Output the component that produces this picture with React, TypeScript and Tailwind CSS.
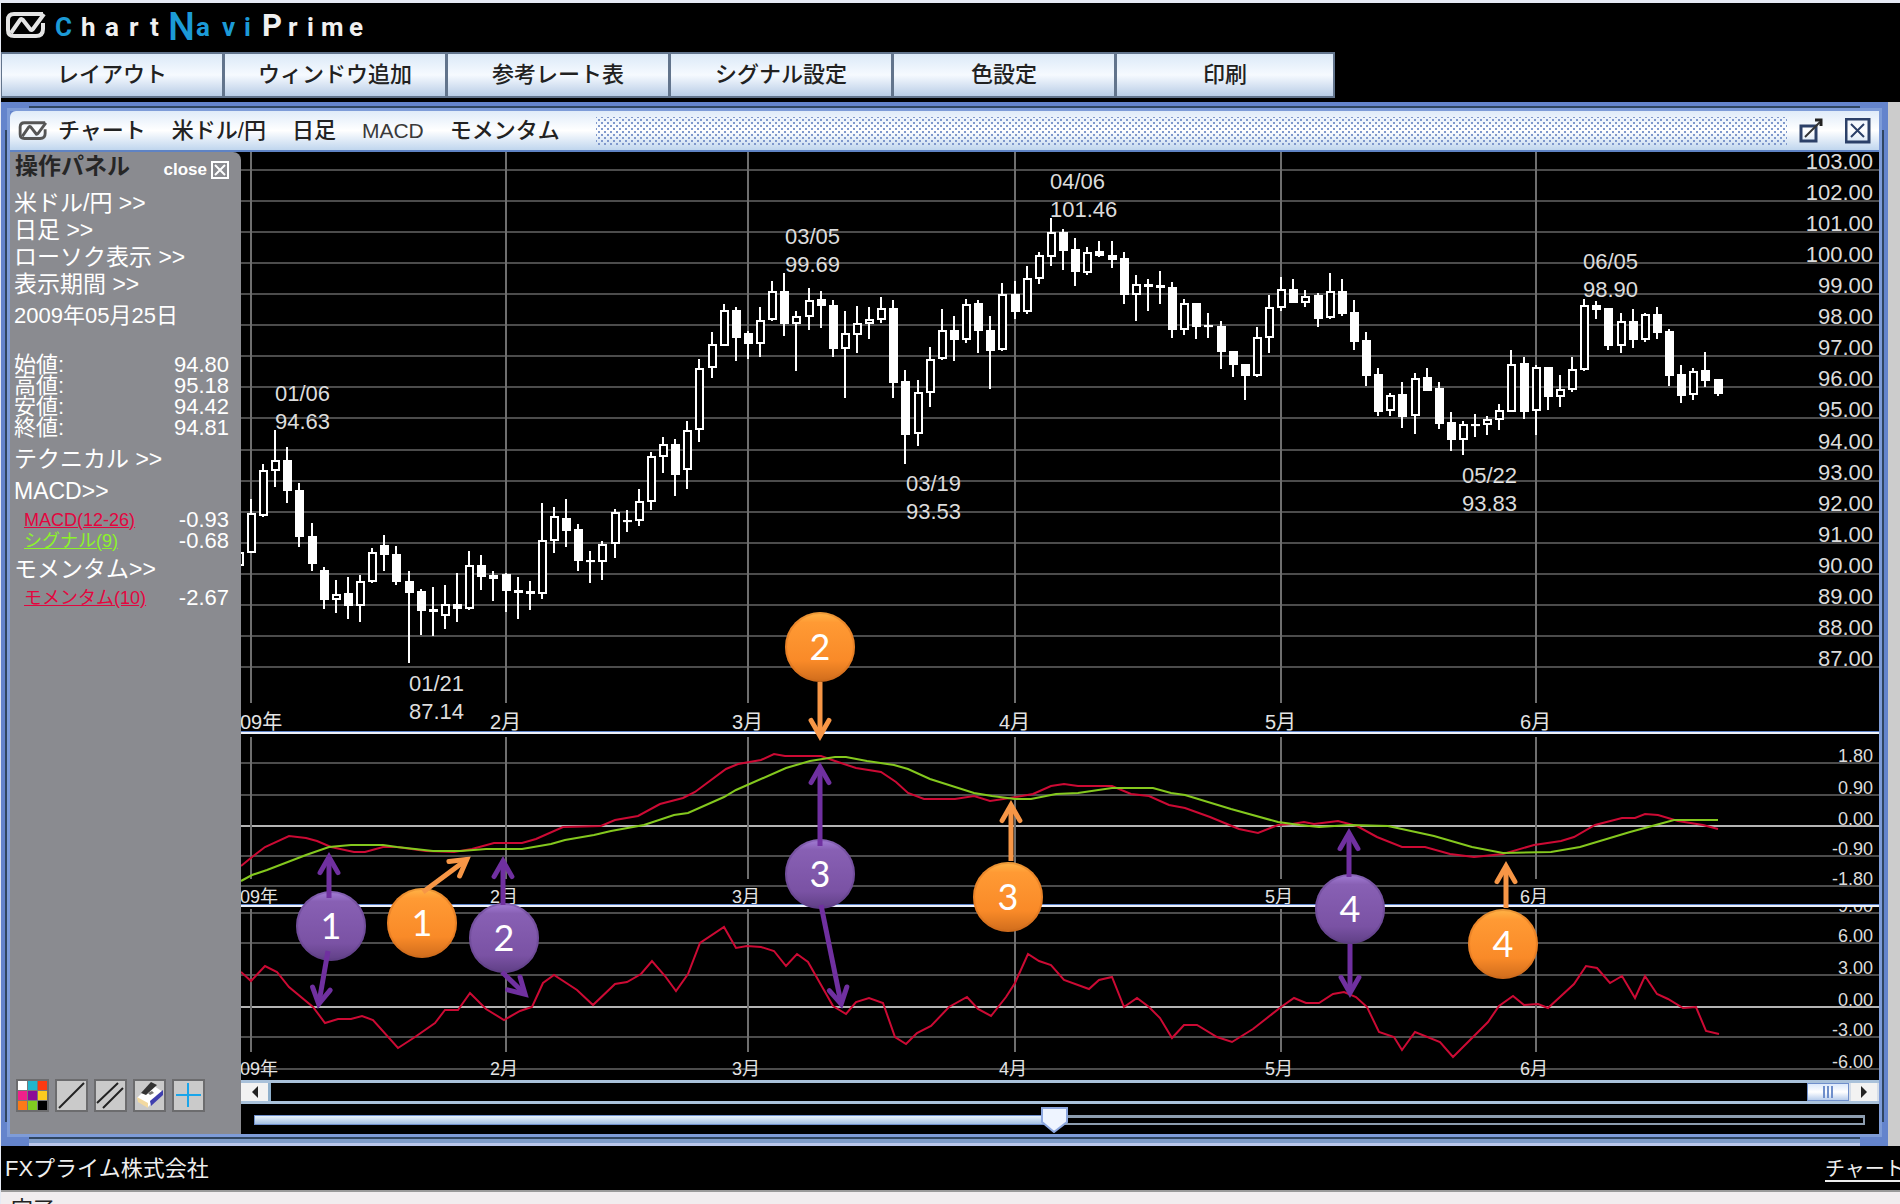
import { useState } from "react"
import type { ReactNode } from "react"

type Candle = [high: number, top: number, bottom: number, low: number, filled: 0 | 1]
type Point = [x: number, y: number]

const MENU = ["レイアウト", "ウィンドウ追加", "参考レート表", "シグナル設定", "色設定", "印刷"]
const PANEL_MENU = ["米ドル/円", "日足", "ローソク表示", "表示期間"]
const OHLC = [
  { label: "始値:", value: "94.80" },
  { label: "高値:", value: "95.18" },
  { label: "安値:", value: "94.42" },
  { label: "終値:", value: "94.81" },
]

const FIRST_X = 251
const STEP = 12.12
const MONTHS = [
  { x: 251, label: "09年" },
  { x: 506, label: "2月" },
  { x: 748, label: "3月" },
  { x: 1015, label: "4月" },
  { x: 1281, label: "5月" },
  { x: 1536, label: "6月" },
]

// One entry per trading day, starting on the last day of 2008
const CANDLES: Candle[] = [
  [552, 552, 566, 566, 0],
  [499, 513, 553, 553, 0], [464, 470, 516, 517, 0], [430, 460, 471, 487, 0], [447, 460, 491, 503, 1],
  [483, 490, 537, 547, 1], [523, 536, 564, 571, 1], [567, 570, 600, 609, 1], [580, 594, 600, 613, 0],
  [577, 593, 606, 619, 1], [575, 581, 606, 622, 0], [548, 552, 582, 583, 0], [535, 545, 555, 571, 1],
  [546, 554, 582, 585, 1], [571, 581, 593, 663, 1], [589, 591, 611, 635, 1], [587, 609, 612, 636, 1],
  [585, 604, 616, 629, 0], [573, 604, 609, 622, 1], [551, 565, 609, 610, 0], [555, 565, 577, 590, 1],
  [571, 575, 579, 601, 1], [573, 574, 591, 612, 1], [577, 590, 593, 619, 1], [581, 591, 594, 610, 1],
  [503, 540, 594, 599, 0], [507, 516, 541, 553, 0], [499, 518, 531, 547, 1], [524, 529, 561, 571, 1],
  [551, 560, 562, 583, 1], [541, 544, 562, 580, 0], [509, 512, 544, 558, 0], [510, 520, 522, 532, 1],
  [489, 501, 521, 526, 0], [452, 456, 502, 510, 0], [437, 444, 457, 473, 0], [439, 444, 475, 496, 1],
  [421, 430, 470, 489, 0], [359, 368, 430, 442, 0], [332, 344, 368, 378, 0], [304, 310, 346, 346, 0],
  [307, 310, 338, 361, 1], [331, 333, 344, 359, 1], [307, 320, 344, 357, 0], [281, 291, 320, 321, 0],
  [273, 291, 324, 336, 1], [311, 316, 324, 371, 0], [288, 300, 317, 330, 0], [291, 299, 306, 328, 1],
  [300, 305, 349, 357, 1], [311, 333, 349, 398, 0], [306, 323, 335, 353, 0], [307, 319, 324, 339, 0],
  [297, 308, 320, 323, 0], [300, 308, 383, 398, 1], [370, 381, 435, 464, 1], [380, 392, 434, 446, 0],
  [347, 359, 393, 407, 0], [309, 330, 359, 360, 0], [316, 330, 340, 361, 1], [299, 304, 340, 343, 0],
  [300, 303, 331, 353, 1], [316, 330, 351, 389, 1], [283, 294, 350, 351, 0], [281, 294, 312, 319, 1],
  [266, 278, 312, 314, 0], [252, 255, 279, 284, 0], [218, 232, 257, 266, 0], [229, 232, 251, 270, 1],
  [238, 249, 272, 286, 1], [247, 252, 273, 275, 0], [241, 251, 256, 257, 1], [241, 255, 260, 268, 1],
  [252, 258, 295, 304, 1], [275, 284, 295, 321, 0], [279, 284, 287, 311, 1], [271, 285, 288, 304, 1],
  [282, 287, 330, 338, 1], [299, 303, 330, 335, 0], [303, 303, 327, 339, 1], [313, 325, 327, 338, 1],
  [321, 326, 352, 369, 1], [351, 351, 365, 377, 1], [364, 364, 376, 400, 1], [327, 337, 376, 377, 0],
  [295, 307, 338, 353, 0], [277, 289, 308, 311, 0], [279, 289, 303, 303, 1], [290, 296, 303, 307, 0],
  [293, 295, 319, 327, 1], [273, 291, 318, 319, 0], [279, 291, 314, 316, 1], [300, 312, 342, 350, 1],
  [332, 340, 376, 386, 1], [368, 374, 412, 416, 1], [393, 395, 411, 416, 0], [382, 394, 417, 428, 1],
  [373, 378, 416, 434, 0], [368, 377, 391, 391, 1], [382, 388, 424, 429, 1], [412, 422, 440, 451, 1],
  [421, 424, 440, 455, 0], [414, 424, 425, 437, 1], [416, 419, 425, 435, 0], [404, 410, 420, 430, 0],
  [350, 364, 412, 412, 0], [357, 363, 412, 419, 1], [365, 367, 411, 435, 0], [367, 367, 397, 410, 1],
  [375, 389, 397, 407, 0], [357, 369, 390, 392, 0], [299, 305, 370, 371, 0], [301, 305, 310, 319, 1],
  [308, 308, 346, 350, 1], [313, 321, 346, 353, 0], [309, 321, 340, 348, 1], [313, 314, 340, 342, 0],
  [307, 314, 333, 339, 1], [329, 331, 376, 386, 1], [365, 374, 396, 403, 1], [368, 371, 395, 400, 0],
  [352, 370, 381, 387, 1], [379, 379, 394, 396, 1],
]

const PEAKS = [
  { x: 275, y: 401, date: "01/06", price: "94.63" },
  { x: 409, y: 691, date: "01/21", price: "87.14" },
  { x: 785, y: 244, date: "03/05", price: "99.69" },
  { x: 906, y: 491, date: "03/19", price: "93.53" },
  { x: 1050, y: 189, date: "04/06", price: "101.46" },
  { x: 1462, y: 483, date: "05/22", price: "93.83" },
  { x: 1583, y: 269, date: "06/05", price: "98.90" },
]

const MACD: Point[] = [
  [241, 866], [252, 857], [265, 847], [289, 836], [306, 838], [317, 841], [331, 847], [354, 852], [365, 852],
  [383, 847], [397, 847], [426, 851], [454, 852], [472, 849], [494, 843], [522, 843], [536, 839], [563, 827],
  [601, 826], [615, 820], [638, 816], [660, 804], [683, 798], [695, 792], [726, 769], [738, 764], [761, 760],
  [774, 754], [785, 756], [821, 756], [835, 761], [856, 768], [881, 772], [896, 782], [908, 793], [924, 799],
  [955, 799], [974, 796], [990, 801], [1010, 798], [1033, 794], [1051, 786], [1064, 784], [1078, 786],
  [1112, 786], [1131, 794], [1149, 796], [1169, 805], [1185, 808], [1210, 817], [1239, 829], [1258, 833],
  [1278, 825], [1292, 824], [1304, 822], [1314, 824], [1338, 821], [1357, 826], [1377, 837], [1402, 847],
  [1425, 847], [1450, 854], [1474, 857], [1503, 854], [1534, 845], [1561, 841], [1574, 837], [1595, 825],
  [1622, 818], [1635, 818], [1645, 814], [1658, 815], [1678, 821], [1703, 825], [1718, 829],
]

const SIGNAL: Point[] = [
  [241, 881], [252, 875], [267, 870], [306, 855], [329, 847], [351, 845], [383, 845], [397, 847], [433, 851],
  [461, 851], [486, 849], [522, 849], [551, 844], [565, 840], [594, 835], [611, 831], [644, 825], [674, 815],
  [688, 813], [724, 797], [736, 790], [786, 768], [810, 761], [835, 757], [846, 757], [867, 761], [894, 765],
  [908, 769], [930, 779], [974, 793], [992, 796], [1015, 799], [1031, 799], [1056, 794], [1078, 793],
  [1112, 788], [1153, 788], [1171, 793], [1185, 795], [1231, 809], [1278, 822], [1300, 825], [1319, 827],
  [1350, 825], [1388, 826], [1434, 836], [1472, 847], [1503, 853], [1551, 852], [1580, 847], [1630, 832],
  [1674, 820], [1718, 820],
]

const MOMENTUM: Point[] = [
  [241, 972], [251, 981], [265, 966], [277, 972], [289, 987], [313, 1007], [325, 1023], [338, 1019], [351, 1019],
  [362, 1016], [373, 1020], [398, 1048], [415, 1037], [435, 1023], [445, 1010], [458, 1010], [470, 993],
  [486, 1009], [504, 1020], [520, 1011], [532, 1007], [543, 983], [554, 975], [577, 990], [593, 1005],
  [615, 984], [627, 982], [641, 974], [652, 961], [665, 976], [676, 991], [688, 974], [700, 943], [724, 927],
  [736, 948], [747, 946], [761, 947], [774, 951], [786, 966], [797, 954], [808, 962], [833, 1006], [846, 1014],
  [856, 1002], [869, 998], [883, 1003], [895, 1037], [906, 1044], [917, 1033], [931, 1026], [949, 1007],
  [967, 997], [978, 1009], [991, 1016], [1006, 997], [1015, 983], [1028, 954], [1039, 961], [1051, 965],
  [1064, 980], [1089, 989], [1099, 980], [1112, 977], [1124, 1007], [1137, 998], [1149, 1007], [1160, 1018],
  [1172, 1038], [1184, 1025], [1197, 1025], [1217, 1037], [1232, 1042], [1253, 1029], [1281, 1007], [1294, 998],
  [1306, 1003], [1319, 1003], [1333, 994], [1344, 992], [1356, 997], [1367, 1007], [1379, 1032], [1394, 1037],
  [1402, 1050], [1415, 1032], [1440, 1042], [1453, 1057], [1488, 1022], [1499, 1006], [1513, 996], [1524, 1005],
  [1538, 1004], [1548, 1008], [1574, 984], [1586, 966], [1597, 968], [1610, 983], [1622, 976], [1635, 998],
  [1645, 976], [1657, 994], [1668, 999], [1683, 1008], [1696, 1007], [1706, 1031], [1719, 1034],
]

const BADGES = [
  { x: 331, y: 926, n: 1, kind: "purple" },
  { x: 422, y: 923, n: 1, kind: "orange" },
  { x: 504, y: 938, n: 2, kind: "purple" },
  { x: 820, y: 647, n: 2, kind: "orange" },
  { x: 820, y: 874, n: 3, kind: "purple" },
  { x: 1008, y: 897, n: 3, kind: "orange" },
  { x: 1350, y: 909, n: 4, kind: "purple" },
  { x: 1503, y: 944, n: 4, kind: "orange" },
]

const ARROWS: { from: Point; to: Point; color: string }[] = [
  { from: [329, 898], to: [329, 853], color: "#7030a0" },
  { from: [328, 951], to: [318, 1008], color: "#7030a0" },
  { from: [423, 892], to: [470, 857], color: "#f79646" },
  { from: [503, 905], to: [503, 857], color: "#7030a0" },
  { from: [502, 972], to: [528, 997], color: "#7030a0" },
  { from: [820, 682], to: [820, 740], color: "#f79646" },
  { from: [820, 846], to: [820, 763], color: "#7030a0" },
  { from: [821, 905], to: [842, 1008], color: "#7030a0" },
  { from: [1011, 861], to: [1011, 801], color: "#f79646" },
  { from: [1349, 877], to: [1349, 829], color: "#7030a0" },
  { from: [1350, 944], to: [1350, 997], color: "#7030a0" },
  { from: [1506, 908], to: [1506, 862], color: "#f79646" },
]

function toPath(points: Point[]) {
  return points.map(([x, y]) => `${x},${y}`).join(" ")
}

function LogoMark() {
  return (
    <g fill="none" strokeWidth="4">
      <path d="M38 2H9Q3 2 3 8v10q0 6 6 6h22q7 0 7-7V11" />
      <path d="M6 21L15 8q1-2 3 0l7 9q1 2 3 0L39 2" strokeLinejoin="round" />
    </g>
  )
}

function Logo() {
  return (
    <svg className="h-[46px] w-[380px]" viewBox="0 3 380 46" aria-label="ChartNaviPrime" role="img">
      <g transform="translate(4 12)" stroke="#e4e4e4">
        <LogoMark />
      </g>
      <g fontFamily="Roboto, sans-serif" fontWeight="700" fontSize="26" fill="#f0f0f0">
        <text y="36" x="54" fill="#1c9ad6">C</text>
        <text y="36" x="80 104 128 149">hart</text>
        <text y="40" x="167" fontSize="38" fontWeight="500" fill="#1c9ad6">N</text>
        <text y="36" x="195 221 243" fill="#1c9ad6">avi</text>
        <text y="36" x="261" fontSize="31">P</text>
        <text y="36" x="287 306 320 348">rime</text>
      </g>
    </svg>
  )
}

function HeaderMenu() {
  return (
    <nav className="flex h-[46px] bg-black">
      {MENU.map((label) => (
        <button
          key={label}
          className="w-[223px] shrink-0 border-2 border-l border-[#62748c] bg-linear-to-b from-[#dbe9f7] via-[#f6faff] to-[#b9cde6] text-[22px] font-medium leading-8 text-[#222] last:w-[219px]"
        >
          {label}
        </button>
      ))}
    </nav>
  )
}

function TitleBar() {
  return (
    <header className="flex h-[41px] items-center rounded-tl-md border-b-2 border-[#5f83c4] bg-linear-to-b from-[#dfebf9] via-white to-[#c0d6ee] pl-2 pr-2 text-[22px] font-medium text-[#222]">
      <svg className="mr-[10px] h-5 w-[30px]" viewBox="0 0 42 27" stroke="#555">
        <LogoMark />
      </svg>
      <h1 className="flex gap-[26px] leading-8">
        <span>チャート</span>
        <span>米ドル/円</span>
        <span>日足</span>
        <span className="text-[21px] text-[#3a3a3a]">MACD</span>
        <span>モメンタム</span>
      </h1>
      <div className="ml-9 h-7 flex-1 bg-[radial-gradient(circle,#7f98cc_1px,transparent_1px),radial-gradient(circle,#7f98cc_1px,transparent_1px)] bg-[size:6px_6px] bg-[position:0_0,3px_3px]" />
      <button aria-label="別ウィンドウ" className="ml-3 mr-5">
        <svg className="h-7 w-[26px]" viewBox="0 0 26 28" fill="none" stroke="#2c4068" strokeWidth="3">
          <rect x="2" y="9" width="15" height="15" />
          <path d="M6 20L21 5" stroke="#333" strokeWidth="2" />
          <path d="M16 3h6v6" stroke="#222" />
        </svg>
      </button>
      <button aria-label="閉じる">
        <svg className="h-[26px] w-[26px]" viewBox="0 0 26 26" fill="none" stroke="#2c4068">
          <rect x="1" y="1" width="23" height="23" strokeWidth="3" />
          <path d="M6 6l13 13M19 6L6 19" strokeWidth="2" />
        </svg>
      </button>
    </header>
  )
}

function ToolButton({ label, children }: { label: string; children: ReactNode }) {
  return (
    <button aria-label={label} className="border-2 border-[#6c6c6e] bg-[#cacaca]">
      <svg className="h-[29px] w-[29px]" viewBox="0 0 29 29" fill="none">
        {children}
      </svg>
    </button>
  )
}

const PALETTE = ["#ffffff", "#22b5cc", "#fb3a12", "#f0208a", "#8c0a96", "#fbcb20", "#fb7a18", "#80cc20", "#000000"]

function Toolbar() {
  return (
    <div className="mt-auto mb-[22px] flex gap-[6px] pl-[2px]">
      <ToolButton label="色">
        <rect width="29" height="29" fill="#77777a" />
        {PALETTE.map((color, i) => (
          <rect key={color} x={(i % 3) * 10} y={Math.floor(i / 3) * 10} width="9" height="9" fill={color} />
        ))}
      </ToolButton>
      <ToolButton label="トレンドライン">
        <path d="M2 27L27 2" stroke="#222" strokeWidth="2" />
      </ToolButton>
      <ToolButton label="平行線">
        <path d="M1 22L22 2M7 27L27 7" stroke="#222" strokeWidth="2" />
      </ToolButton>
      <ToolButton label="消しゴム">
        <path d="M2 17L16 3l12 8-15 15z" fill="#fff" />
        <path d="M6 12L16 1l6 3-11 10z" fill="#333" />
        <path d="M2 16l11 6v5L3 21z" fill="#f2d9a0" />
        <path d="M15 20L28 9v5L16 25z" fill="#3f3fae" />
        <path d="M13 12l4-2 2 2-4 2z" fill="#777" />
      </ToolButton>
      <ToolButton label="十字線">
        <path d="M14 2v24M2 14h25" stroke="#1aa5ea" strokeWidth="2" />
      </ToolButton>
    </div>
  )
}

function ControlPanel() {
  return (
    <aside className="flex w-[231px] shrink-0 flex-col rounded-tr-lg bg-[#8a8b90] pl-1 text-[22px] text-white">
      <div className="flex h-[38px] items-start pl-px pr-3">
        <h2 className="flex-1 text-[23px] font-bold leading-7 text-[#262626]">操作パネル</h2>
        <button className="mt-2 flex items-center gap-1 text-[17px] font-bold leading-5">
          close
          <svg className="h-[18px] w-[18px]" viewBox="0 0 18 18" fill="none" stroke="#fff" strokeWidth="2">
            <path d="M1 1h16v16H1zM4 4l10 10M14 4L4 14" />
          </svg>
        </button>
      </div>
      <ul className="text-[23px] leading-[27px]">
        {PANEL_MENU.map((item) => (
          <li key={item}>
            <button>{item} &gt;&gt;</button>
          </li>
        ))}
      </ul>
      <p className="mt-1 leading-[28px]">2009年05月25日</p>
      <dl className="mt-6 pr-3">
        {OHLC.map(({ label, value }) => (
          <div key={label} className="flex h-[21px] justify-between leading-[21px]">
            <dt>{label}</dt>
            <dd>{value}</dd>
          </div>
        ))}
      </dl>
      <button className="mt-[6px] self-start text-[23px] leading-[30px]">テクニカル &gt;&gt;</button>
      <button className="mt-[2px] self-start text-[23px] leading-[30px]">MACD&gt;&gt;</button>
      <div className="mt-[3px] pl-[10px] pr-3">
        <div className="flex h-[21px] items-center justify-between">
          <a href="#macd" className="text-[18px] leading-5 text-[#e3063f] underline">MACD(12-26)</a>
          <span className="leading-5">-0.93</span>
        </div>
        <div className="flex h-[21px] items-center justify-between">
          <a href="#signal" className="text-[18px] leading-5 text-[#8cf32a] underline">シグナル(9)</a>
          <span className="leading-5">-0.68</span>
        </div>
      </div>
      <button className="mt-[3px] self-start text-[23px] leading-[30px]">モメンタム&gt;&gt;</button>
      <div className="flex h-7 items-center justify-between pl-[10px] pr-3">
        <a href="#momentum" className="text-[18px] leading-6 text-[#e3063f] underline">モメンタム(10)</a>
        <span className="leading-6">-2.67</span>
      </div>
      <Toolbar />
    </aside>
  )
}

type GridProps = {
  rows: { y: number; label: string }[]
  top: number
  bottom: number
  baseline: number
  rowSize: number
  monthSize: number
}

function Grid({ rows, top, bottom, baseline, rowSize, monthSize }: GridProps) {
  return (
    <g>
      {rows.map(({ y, label }) => (
        <line key={label} x1="241" x2="1879" y1={y} y2={y} stroke={label === "0.00" ? "#b4b4b4" : "#4c4c4c"} strokeWidth="2" />
      ))}
      {MONTHS.map(({ x }) => (
        <line key={x} x1={x} x2={x} y1={top} y2={bottom} stroke="#6e6e6e" strokeWidth="2" />
      ))}
      {rows.map(({ y, label }) => (
        <text key={label} x="1873" y={y - 1} textAnchor="end" fontSize={rowSize} fill="#dcdcdc">{label}</text>
      ))}
      {MONTHS.map(({ x, label }, i) => (
        <text key={label} x={i === 0 ? 240 : x - 16} y={baseline} fontSize={monthSize} fill="#e4e4e4">{label}</text>
      ))}
    </g>
  )
}

const PRICE_ROWS = Array.from({ length: 17 }, (_, i) => ({
  y: Math.round(170 + i * 31.06),
  label: `${103 - i}.00`,
}))

function PriceChart() {
  return (
    <svg className="w-full" viewBox="241 152 1638 579">
      <Grid rows={PRICE_ROWS} top={152} bottom={703} baseline={729} rowSize={22} monthSize={20} />
      {CANDLES.map(([high, top, bottom, low, filled], i) => {
        const x = Math.round(FIRST_X + (i - 1) * STEP)
        return (
          <g key={i} stroke="#fff" strokeWidth="2">
            <line x1={x} x2={x} y1={high} y2={low} />
            <rect
              x={x - 3}
              y={top + 1}
              width="7"
              height={Math.max(bottom - top - 2, 0.1)}
              fill={filled ? "#fff" : "#000"}
            />
          </g>
        )
      })}
      {PEAKS.map(({ x, y, date, price }) => (
        <g key={date} fontSize="22" fill="#dcdcdc">
          <text x={x} y={y}>{date}</text>
          <text x={x} y={y + 28}>{price}</text>
        </g>
      ))}
    </svg>
  )
}

function MacdChart() {
  const rows = [
    { y: 763, label: "1.80" },
    { y: 795, label: "0.90" },
    { y: 826, label: "0.00" },
    { y: 856, label: "-0.90" },
    { y: 886, label: "-1.80" },
  ]
  return (
    <svg className="w-full" viewBox="241 734 1638 170">
      <Grid rows={rows} top={737} bottom={879} baseline={903} rowSize={18} monthSize={18} />
      <polyline points={toPath(MACD)} fill="none" stroke="#cc0a34" strokeWidth="2" />
      <polyline points={toPath(SIGNAL)} fill="none" stroke="#84c81e" strokeWidth="2" />
    </svg>
  )
}

function MomentumChart() {
  const rows = [
    { y: 913, label: "9.00" },
    { y: 943, label: "6.00" },
    { y: 975, label: "3.00" },
    { y: 1007, label: "0.00" },
    { y: 1037, label: "-3.00" },
    { y: 1069, label: "-6.00" },
  ]
  return (
    <svg className="w-full" viewBox="241 907 1638 173">
      <Grid rows={rows} top={909} bottom={1052} baseline={1075} rowSize={18} monthSize={18} />
      <polyline points={toPath(MOMENTUM)} fill="none" stroke="#cc0a34" strokeWidth="2" />
    </svg>
  )
}

function Arrow({ from, to, color }: { from: Point; to: Point; color: string }) {
  const angle = Math.atan2(to[1] - from[1], to[0] - from[0])
  // the miter of the head reaches past its corner
  const tipX = to[0] - Math.cos(angle) * 4
  const tipY = to[1] - Math.sin(angle) * 4
  const wing = (offset: number) =>
    `${tipX - Math.cos(angle + offset) * 18} ${tipY - Math.sin(angle + offset) * 18}`
  return (
    <g fill="none" stroke={color} strokeWidth="5">
      <path d={`M${from[0]} ${from[1]}L${tipX} ${tipY}`} />
      <path d={`M${wing(0.52)}L${tipX} ${tipY}L${wing(-0.52)}`} strokeLinecap="round" />
    </g>
  )
}

function Annotations() {
  return (
    <svg className="pointer-events-none absolute inset-0 h-full w-full" viewBox="241 152 1638 928">
      <defs>
        <linearGradient id="purple" x1="0" y1="0" x2="0" y2="1">
          <stop offset="0" stopColor="#a57fd8" />
          <stop offset="0.15" stopColor="#8860b4" />
          <stop offset="0.75" stopColor="#7a52a4" />
          <stop offset="1" stopColor="#5f3f85" />
        </linearGradient>
        <linearGradient id="orange" x1="0" y1="0" x2="0" y2="1">
          <stop offset="0" stopColor="#ffb648" />
          <stop offset="0.15" stopColor="#ff9a34" />
          <stop offset="0.7" stopColor="#f98a28" />
          <stop offset="1" stopColor="#cf6c1c" />
        </linearGradient>
      </defs>
      {BADGES.map(({ x, y, n, kind }) => (
        <g key={kind + n}>
          <circle cx={x} cy={y} r="35" fill={kind === "purple" ? "url(#purple)" : "url(#orange)"} />
          <circle cx={x} cy={y} r="34" fill="none" stroke={kind === "purple" ? "#5a3c80" : "#c8681c"} strokeOpacity="0.35" strokeWidth="2" />
          <text x={x} y={y + 13} textAnchor="middle" fontFamily="Lato, sans-serif" fontSize="36" fill="#fff">{n}</text>
        </g>
      ))}
      {ARROWS.map((arrow) => (
        <Arrow key={arrow.to.join()} {...arrow} />
      ))}
    </svg>
  )
}

function ScrollBar() {
  return (
    <div className="flex h-6 border-y-3 border-[#a9c1da]">
      <button aria-label="前へ" className="flex w-[30px] items-center justify-center border-r-3 border-[#8fb0cc] bg-[#f2f2f2]">
        <svg className="h-3 w-2" viewBox="0 0 8 12"><path d="M7 0v12L1 6z" fill="#222" /></svg>
      </button>
      <div className="flex flex-1 justify-end">
        <button aria-label="スクロール" className="flex w-[42px] items-center justify-center gap-[2px] border border-[#6f8fcb] bg-linear-to-b from-[#dce9fb] via-white to-[#b8cdec]">
          <span className="h-3 w-[2px] bg-[#6f8fcb]" />
          <span className="h-3 w-[2px] bg-[#6f8fcb]" />
          <span className="h-3 w-[2px] bg-[#6f8fcb]" />
        </button>
      </div>
      <button aria-label="次へ" className="flex w-[30px] items-center justify-center border-l-2 border-r-2 border-[#d5dde8] bg-[#f2f2f2]">
        <svg className="h-3 w-2" viewBox="0 0 8 12"><path d="M1 0v12l6-6z" fill="#222" /></svg>
      </button>
    </div>
  )
}

function ZoomSlider() {
  const [value, setValue] = useState(497)
  const percent = `${value / 10}%`
  return (
    <div className="flex h-[30px] items-center pl-[13px] pr-[14px] pt-[2px]">
      <div className="relative flex h-[10px] flex-1 border-t-3 border-r-2 border-b-2 border-[#8d9daf]">
        <div
          className="-mt-[3px] h-[10px] border border-[#6f8fcb] bg-linear-to-b from-[#e8f2fc] to-[#a4c0e2]"
          style={{ width: percent }}
        />
        <svg className="absolute -top-[11px] -ml-[13px] h-[26px] w-[27px]" style={{ left: percent }} viewBox="0 0 27 26">
          <path d="M1 1h25v14L13 25 1 15z" fill="#eef4ff" stroke="#8ea8e0" strokeWidth="2" />
        </svg>
        <input
          type="range"
          aria-label="表示幅"
          min={0}
          max={1000}
          value={value}
          onChange={(e) => setValue(Number(e.target.value))}
          className="absolute inset-0 w-full cursor-pointer opacity-0"
        />
      </div>
    </div>
  )
}

function ChartWindow() {
  return (
    <section className="relative flex-1 border-4 border-b-0 border-[#6484cc] bg-[#2f4560]">
      <div className="absolute left-0 top-0 h-6 w-6 bg-[#6484cc]" />
      <div className="absolute right-0 top-0 h-6 w-6 bg-[#6484cc]" />
      <div className="absolute bottom-0 left-0 h-6 w-6 bg-[#6484cc]" />
      <div className="absolute bottom-0 right-0 h-6 w-6 bg-[#6484cc]" />
      <div className="relative m-[2px] border-3 border-[#7e9cd8]">
        <TitleBar />
        <div className="flex bg-black">
          <ControlPanel />
          <main className="min-w-0 flex-1">
            <div className="relative">
              <PriceChart />
              <div className="h-[3px] border-t border-[#5d83c8] bg-[#eef2fa]" />
              <MacdChart />
              <div className="h-[3px] border-t border-[#5d83c8] bg-[#eef2fa]" />
              <MomentumChart />
              <Annotations />
            </div>
            <ScrollBar />
            <ZoomSlider />
          </main>
        </div>
      </div>
      <div className="h-[7px] border-t-4 border-b-3 border-t-[#7e9cc8] border-b-[#b9c6ea]" />
    </section>
  )
}

export default function App() {
  return (
    <div className="flex h-screen flex-col overflow-hidden border-l border-t-3 border-[#e6eaf4] bg-black font-['Liberation_Sans','Noto_Sans_CJK_JP',sans-serif]">
      <div className="h-[49px] shrink-0">
        <Logo />
      </div>
      <HeaderMenu />
      <div className="mt-1 flex">
        <ChartWindow />
        <div className="w-3 shrink-0 bg-[#cccccc]" />
      </div>
      <footer className="flex h-11 shrink-0 items-center overflow-hidden whitespace-nowrap pl-1 pt-[2px] text-[22px] leading-8 text-[#eee]">
        <span className="flex-1">FXプライム株式会社</span>
        <a href="#chart" className="w-[75px] text-[20px] underline underline-offset-4">チャート</a>
      </footer>
      <div className="flex-1 overflow-hidden border-t-2 border-[#9a9a9a] bg-[#f1edef] pl-[10px]">
        <p className="pt-[6px] text-[22px] leading-6 text-[#222]">完了</p>
      </div>
    </div>
  )
}
